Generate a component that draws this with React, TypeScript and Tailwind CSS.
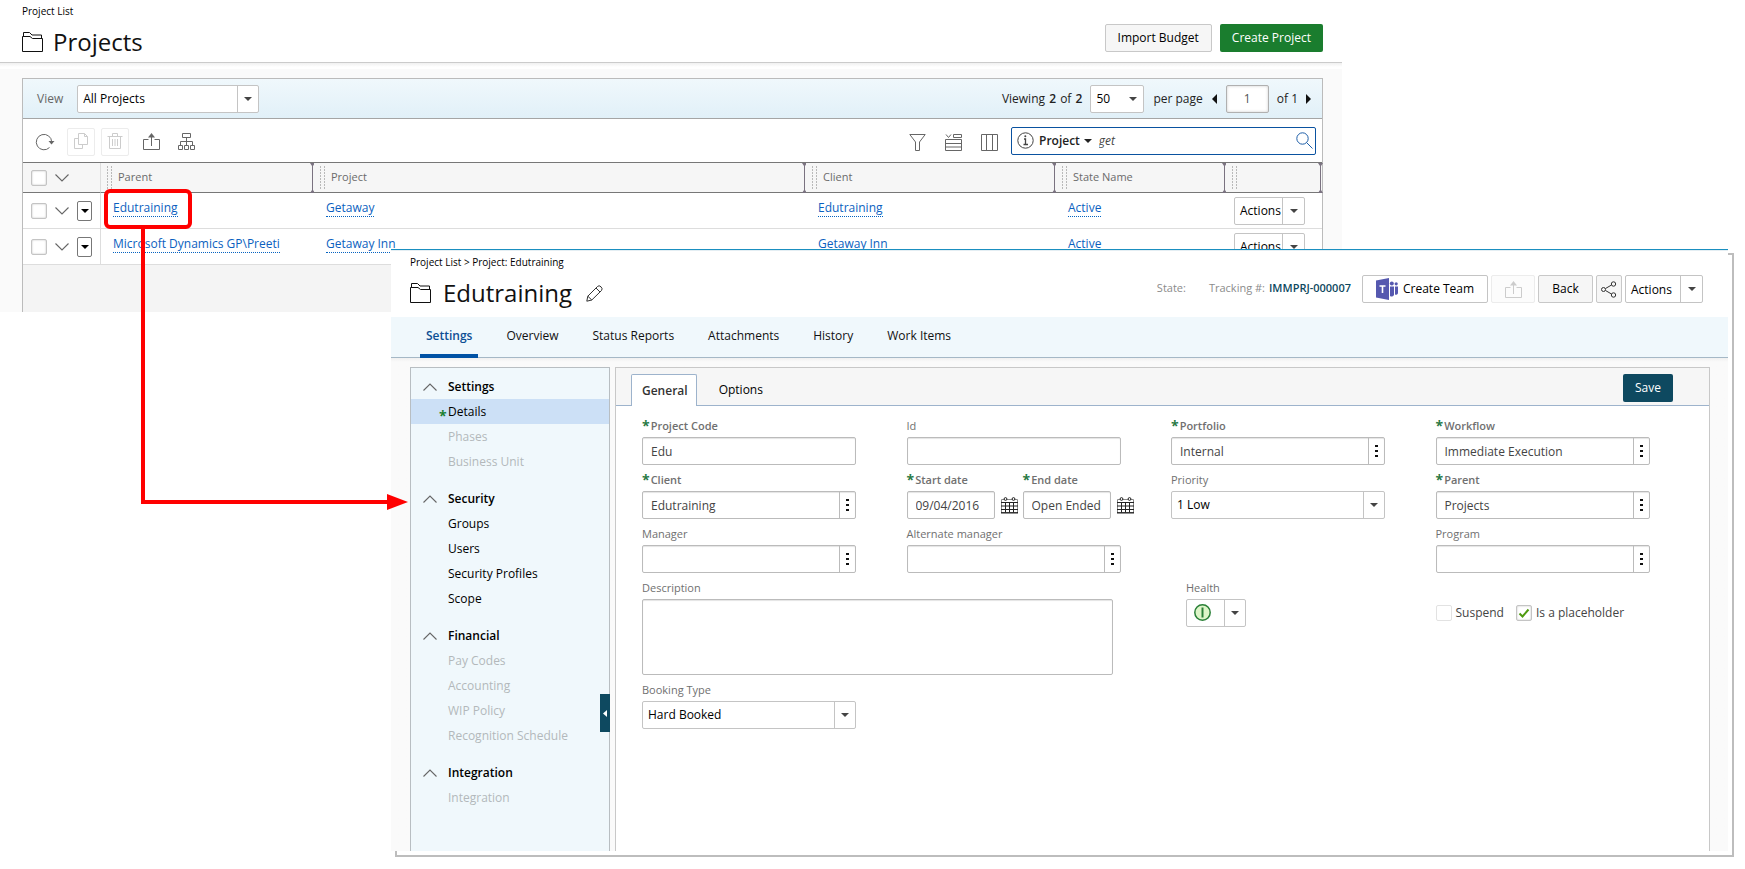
import React, { useState } from 'react';

const projects = [
  { id: 1, parent: 'Edutraining', project: 'Getaway', client: 'Edutraining', state: 'Active' },
  { id: 2, parent: 'Microsoft Dynamics GP\\Preeti', project: 'Getaway Inn', client: 'Getaway Inn', state: 'Active' },
];

const tabs = ['Settings', 'Overview', 'Status Reports', 'Attachments', 'History', 'Work Items'];

const menu = [
  {
    title: 'Settings',
    items: [
      { label: 'Details', active: true },
      { label: 'Phases', disabled: true },
      { label: 'Business Unit', disabled: true },
    ],
  },
  {
    title: 'Security',
    items: [{ label: 'Groups' }, { label: 'Users' }, { label: 'Security Profiles' }, { label: 'Scope' }],
  },
  {
    title: 'Financial',
    items: [
      { label: 'Pay Codes', disabled: true },
      { label: 'Accounting', disabled: true },
      { label: 'WIP Policy', disabled: true },
      { label: 'Recognition Schedule', disabled: true },
    ],
  },
  { title: 'Integration', items: [{ label: 'Integration', disabled: true }] },
] as { title: string; items: { label: string; active?: boolean; disabled?: boolean }[] }[];

function Caret() {
  return (
    <svg width="8" height="4" viewBox="0 0 8 4" className="shrink-0">
      <path d="M0 0h8L4 4z" fill="currentColor" />
    </svg>
  );
}

function FolderIcon() {
  return (
    <svg width="21" height="20" viewBox="0 0 21 20" fill="none" stroke="#111" className="shrink-0">
      <path d="M.5 4.500V19.500H20.500V6.500H10.500L8 4.500H.5zM1.500 4V.5H7.500L10 3H19.500V6" />
    </svg>
  );
}

function Chevron({ up = false }: { up?: boolean }) {
  return (
    <svg width="14" height="8" viewBox="0 0 14 8" fill="none" stroke="#666" strokeWidth="1.100" className="shrink-0">
      <path d={up ? 'M.5 7.500L7 1l6.500 6.500' : 'M.5.5L7 7 13.500.5'} />
    </svg>
  );
}

function ExportIcon() {
  return (
    <svg width="17" height="17" viewBox="0 0 17 17" fill="none" stroke="currentColor">
      <path d="M5.500 6.500h-5v10h16v-10h-5M8.500 13V1.500" />
      <path d="M5 4.500L8.500 0 12 4.500z" fill="currentColor" stroke="none" />
    </svg>
  );
}

function CalendarIcon() {
  return (
    <svg width="17" height="17" viewBox="0 0 17 17" fill="none" stroke="#222">
      <path d="M.5 16V2.500h16V16" stroke="#888" />
      <path d="M0 5.500h17M0 9h17M0 12.500h17M4.500 5.500v10M8.500 5.500v10M12.500 5.500v10" />
      <path d="M0 15.800h17" strokeWidth="1.400" />
      <circle cx="4.500" cy="2" r="1.400" fill="#fff" />
      <circle cx="12.500" cy="2" r="1.400" fill="#fff" />
    </svg>
  );
}

function TeamsIcon() {
  return (
    <svg width="22" height="22" viewBox="0 0 22 22" className="shrink-0">
      <path d="M0 2.500L13 0v22L0 19.500z" fill="#5558af" />
      <path d="M3.500 8h6M6.500 8v7" stroke="#fff" strokeWidth="1.600" />
      <circle cx="15.800" cy="5.500" r="2" fill="#5558af" />
      <circle cx="20.200" cy="5.800" r="1.600" fill="#5558af" />
      <path d="M14 8.500h4v8.500a3 3 0 0 1-4 1zM19 8.500h3v6.500a2 2 0 0 1-3 1.500z" fill="#5558af" />
    </svg>
  );
}

function CheckBox({ label, defaultChecked = false, light = false }: { label: string; defaultChecked?: boolean; light?: boolean }) {
  return (
    <span className="relative block size-4 shrink-0">
      <input
        type="checkbox"
        aria-label={label}
        defaultChecked={defaultChecked}
        className={`peer block size-4 appearance-none rounded-xs border bg-white ${
          light ? 'border-[#e2e2e2]' : 'border-[#c4c4c4] shadow-[inset_0_0_2px_#bbb]'
        }`}
      />
      <svg viewBox="0 0 16 16" className="pointer-events-none absolute inset-0 hidden size-4 peer-checked:block" fill="none" stroke="#4f9a10" strokeWidth="2">
        <path d="M3.500 8.500l3 3 6-7" />
      </svg>
    </span>
  );
}

function SelectBox({ id, options, className = '', divider = true, label }: { id?: string; options: string[]; className?: string; divider?: boolean; label?: string }) {
  return (
    <div className={`relative h-7 rounded-xs border border-[#c4c4c4] bg-white ${className}`}>
      <select id={id} aria-label={label} className="block h-full w-full appearance-none pl-[5px] pr-6 text-xs text-black outline-none">
        {options.map((o) => (
          <option key={o}>{o}</option>
        ))}
      </select>
      <span
        className={`pointer-events-none absolute inset-y-0 right-0 flex w-[21px] items-center justify-center text-[#444] ${
          divider ? 'border-l border-[#c4c4c4]' : ''
        }`}
      >
        <Caret />
      </span>
    </div>
  );
}

function SplitButton({ className = '' }: { className?: string }) {
  return (
    <div className={`flex h-7 rounded-xs border border-[#c4c4c4] bg-white text-xs ${className}`}>
      <button type="button" className="flex-1 pt-px pl-[5px] text-left">
        Actions
      </button>
      <button type="button" aria-label="More actions" className="flex w-[22px] items-center justify-center border-l border-[#c4c4c4] text-[#444]">
        <Caret />
      </button>
    </div>
  );
}

function Label({ htmlFor, text, required = false }: { htmlFor: string; text: string; required?: boolean }) {
  return (
    <label
      htmlFor={htmlFor}
      className={`flex h-[22px] items-center whitespace-nowrap text-[11px] text-[#707070] ${required ? 'font-semibold' : ''}`}
    >
      {required && <span className="mr-px h-4 text-sm leading-4 font-bold text-[#2a7a45]">*</span>}
      {text}
    </label>
  );
}

function TextField({
  id,
  label,
  value = '',
  required = false,
  picker = false,
  className = '',
}: {
  id: string;
  label: string;
  value?: string;
  required?: boolean;
  picker?: boolean;
  className?: string;
}) {
  return (
    <div className={`w-[81%] ${className}`}>
      <Label htmlFor={id} text={label} required={required} />
      <div className="flex h-7 rounded-xs border border-[#bbb] bg-white shadow-[inset_0_1px_1px_#e4e4e4]">
        <input id={id} defaultValue={value} className="w-full min-w-0 flex-1 bg-transparent px-2 pt-px text-xs text-[#444] outline-none" />
        {picker && (
          <button type="button" aria-label={`Pick ${label}`} className="flex w-4 shrink-0 items-center justify-center border-l border-[#bbb]">
            <svg width="3" height="13" viewBox="0 0 3 13" fill="#111">
              <path d="M0 0h3v2H0zM0 5h3v2H0zM0 10h3v2H0z" />
            </svg>
          </button>
        )}
      </div>
    </div>
  );
}

function DateField({ id, label, value }: { id: string; label: string; value: string }) {
  return (
    <div>
      <Label htmlFor={id} text={label} required />
      <div className="flex items-center gap-[6px]">
        <input
          id={id}
          defaultValue={value}
          className="h-7 w-[88px] rounded-xs border border-[#bbb] bg-white px-2 pt-px text-xs text-[#444] shadow-[inset_0_1px_1px_#e4e4e4] outline-none"
        />
        <button type="button" aria-label={`Open ${label} calendar`}>
          <CalendarIcon />
        </button>
      </div>
    </div>
  );
}

// Column resize handle drawn at the right edge of a header cell
function Resizer() {
  return (
    <svg width="5" height="30" viewBox="0 0 5 30" className="absolute top-0 -right-px">
      <path d="M0 0h5L3 3v24l2 3H0l2-3V3z" fill="#7a7280" />
    </svg>
  );
}

function HeaderCell({ text }: { text: string }) {
  return (
    <th className="relative h-[30px] border-b border-[#777] bg-[#f6f6f6] p-0 text-left font-normal text-[#6b6b6b]">
      <div className="flex items-center gap-[6px] pl-[6px] text-[11px]">
        <svg width="5" height="23" viewBox="0 0 5 23" fill="none" stroke="#b9b9b9" strokeDasharray="2 1">
          <path d="M.5 0v23M4.500 0v23" />
        </svg>
        {text}
      </div>
      <Resizer />
    </th>
  );
}

function CellLink({ children }: { children: React.ReactNode }) {
  return (
    <a href="#" className="border-b border-dotted border-[#0563c1] text-xs leading-4 whitespace-nowrap text-[#0b5fc0]">
      {children}
    </a>
  );
}

function ProjectList() {
  return (
    <section className="mr-[403px] bg-white">
      <header className="flex items-start justify-between border-b border-[#cbcbcb] pt-1 pr-[19px] pb-1 pl-[22px]">
        <div>
          <p className="text-[10px] leading-[14px]">Project List</p>
          <div className="mt-2 flex items-center gap-[10px]">
            <FolderIcon />
            <h1 className="text-2xl leading-8 text-[#111]">Projects</h1>
          </div>
        </div>
        <div className="mt-5 flex gap-2 text-xs">
          <button type="button" className="h-7 rounded-xs border border-[#c8c8c8] bg-[#f6f6f6] px-3">
            Import Budget
          </button>
          <button type="button" className="h-7 rounded-xs bg-[#1a7d2e] px-3 text-white">
            Create Project
          </button>
        </div>
      </header>

      <div className="bg-[#fafafa] bg-[linear-gradient(#f0f0f0,#fff_4px,#fff_6px,#fafafa_6px)] pt-[15px] pr-[19px] pl-[22px]">
        <div className="border border-b-0 border-[#bbb] bg-[#f4f4f4] pb-[47px]">
          {/* View and paging */}
          <div className="flex h-10 items-center justify-between border-b border-[#a5a5a5] bg-linear-to-b from-[#f0f8fc] to-[#e1f0f8] pr-[11px] pl-[14px] text-xs">
            <div className="flex items-center gap-[14px]">
              <label htmlFor="view" className="text-[#666]">
                View
              </label>
              <SelectBox id="view" options={['All Projects']} className="w-[182px]" />
            </div>
            <div className="flex items-center gap-2 text-[#222]">
              <span className="whitespace-nowrap">
                Viewing <b className="mx-px font-semibold">2</b> of <b className="ml-px font-semibold">2</b>
              </span>
              <SelectBox label="Rows per page" options={['50']} className="w-[54px]" divider={false} />
              <span className="ml-px">per page</span>
              <button type="button" aria-label="Previous page" className="px-px">
                <svg width="5" height="10" viewBox="0 0 5 10">
                  <path d="M5 0v10L0 5z" fill="#111" />
                </svg>
              </button>
              <input
                aria-label="Page"
                defaultValue="1"
                className="h-7 w-[43px] rounded-xs border border-[#b0b0b0] bg-white text-center text-[#555] shadow-[inset_0_0_3px_#ccc] outline-none"
              />
              <span>of 1</span>
              <button type="button" aria-label="Next page">
                <svg width="5" height="10" viewBox="0 0 5 10">
                  <path d="M0 0v10l5-5z" fill="#111" />
                </svg>
              </button>
            </div>
          </div>

          {/* Toolbar */}
          <div className="flex h-11 items-center justify-between border-b border-[#777] bg-white pr-[6px] pl-3 text-[#666]">
            <div className="flex items-center pt-[2px]">
              <button type="button" aria-label="Refresh">
                <svg width="20" height="18" viewBox="0 0 20 18" fill="none" stroke="currentColor">
                  <path d="M14.500 14.500A7.700 7.700 0 1 1 16.700 9" />
                  <path d="M13.500 8h6l-3 3.500z" fill="currentColor" stroke="none" />
                </svg>
              </button>
              <button type="button" aria-label="Copy" className="ml-3 flex size-7 items-center justify-center rounded-xs border border-[#ececec] text-[#ccc]">
                <svg width="16" height="17" viewBox="0 0 16 17" fill="none" stroke="currentColor">
                  <path d="M5.500.5h6l3 3v8h-9zM11.500.5v3h3M5.500 5.500h-4v10h8v-4" />
                </svg>
              </button>
              <button type="button" aria-label="Delete" className="ml-[6px] flex size-7 items-center justify-center rounded-xs border border-[#ececec] text-[#ccc]">
                <svg width="16" height="17" viewBox="0 0 16 17" fill="none" stroke="currentColor">
                  <path d="M.5 3.500h15M5.500 3V.5h5V3M2.500 3.500v12h11v-12M5.500 6v7M8 6v7M10.500 6v7" />
                </svg>
              </button>
              <button type="button" aria-label="Export" className="ml-[14px]">
                <ExportIcon />
              </button>
              <button type="button" aria-label="Hierarchy" className="ml-[18px]">
                <svg width="17" height="17" viewBox="0 0 17 17" fill="none" stroke="currentColor">
                  <path d="M4.500.5h8v4h-8zM8.500 4.500v8M2.500 12V8.500h12V12M.5 12.500h4v4h-4zM6.500 12.500h4v4h-4zM12.500 12.500h4v4h-4z" />
                </svg>
              </button>
            </div>
            <div className="flex items-center">
              <div className="flex items-center gap-[19px] pt-[3px]">
                <button type="button" aria-label="Filter">
                  <svg width="17" height="17" viewBox="0 0 17 17" fill="none" stroke="currentColor">
                    <path d="M.8.5h15.400L10.500 8v8.500h-4V8z" />
                  </svg>
                </button>
                <button type="button" aria-label="Group rows">
                  <svg width="17" height="17" viewBox="0 0 17 17" fill="none" stroke="currentColor">
                    <path d="M1 .5l2.500 3L6 .5M8.500.5h8v3h-8zM.5 5.500h16v11H.5zM.5 9.500h16M.5 13h16" />
                  </svg>
                </button>
                <button type="button" aria-label="Columns">
                  <svg width="17" height="17" viewBox="0 0 17 17" fill="none" stroke="currentColor">
                    <path d="M.5.5h16v16H.5zM5.500.5v16M11.500.5v16" />
                  </svg>
                </button>
              </div>
              <div className="ml-[13px] flex h-7 w-[305px] items-center rounded-xs border border-[#0a52a0] bg-white pr-[2px] pl-[5px] text-xs">
                <svg width="17" height="17" viewBox="0 0 17 17" fill="none" stroke="#444">
                  <circle cx="8.500" cy="8.500" r="7.700" />
                  <path d="M7 7h1.500v5.500M6.500 12.500h4.500" strokeWidth="1.300" />
                  <circle cx="8.300" cy="4.300" r="1" fill="#444" stroke="none" />
                </svg>
                <button type="button" className="ml-[5px] flex items-center gap-1 font-semibold text-[#222]">
                  Project
                  <Caret />
                </button>
                <input aria-label="Search projects" defaultValue="get" className="ml-[7px] min-w-0 flex-1 text-[#444] italic outline-none" />
                <button type="button" aria-label="Search">
                  <svg width="17" height="17" viewBox="0 0 17 17" fill="none" stroke="#1d5ea8">
                    <circle cx="6.500" cy="6.500" r="5.700" />
                    <path d="M10.500 10.500l6 6" />
                  </svg>
                </button>
              </div>
            </div>
          </div>

          <table className="w-full table-fixed border-separate border-spacing-0">
            <colgroup>
              <col className="w-[78px]" />
              <col className="w-[213px]" />
              <col />
              <col className="w-[250px]" />
              <col className="w-[170px]" />
              <col className="w-24" />
            </colgroup>
            <thead>
              <tr>
                <th className="h-[30px] border-r border-b border-r-[#ddd] border-b-[#777] bg-[#f6f6f6] p-0">
                  <div className="flex items-center gap-2 pl-2">
                    <CheckBox label="Select all" />
                    <Chevron />
                  </div>
                </th>
                <HeaderCell text="Parent" />
                <HeaderCell text="Project" />
                <HeaderCell text="Client" />
                <HeaderCell text="State Name" />
                <HeaderCell text="" />
              </tr>
            </thead>
            <tbody>
              {projects.map((p) => (
                <tr key={p.id} className="*:h-9 *:border-b *:border-[#ddd] *:bg-white *:p-0">
                  <td className="border-r">
                    <div className="flex items-center gap-2 pt-px pl-2">
                      <CheckBox label={`Select ${p.project}`} />
                      <Chevron />
                      <button type="button" aria-label="Row menu" className="flex h-5 w-[15px] items-center justify-center rounded-xs border border-[#777] text-black">
                        <Caret />
                      </button>
                    </div>
                  </td>
                  {[p.parent, p.project, p.client, p.state].map((value, i) => (
                    <td key={i} className="align-top">
                      <div className="flex pt-[7px] pl-3">
                        <CellLink>{value}</CellLink>
                      </div>
                    </td>
                  ))}
                  <td>
                    <SplitButton className="mx-2 w-[71px]" />
                  </td>
                </tr>
              ))}
            </tbody>
          </table>
        </div>
      </div>
    </section>
  );
}

function Sidebar() {
  return (
    <nav className="relative w-[200px] shrink-0 border border-b-0 border-[#b8bec2] bg-[#f0f8fc] pt-[6px] pb-[41px] text-xs">
      {menu.map((group) => (
        <div key={group.title} className="mb-3 last-of-type:mb-0">
          <button type="button" className="flex h-[25px] items-center gap-[11px] pl-3 font-semibold">
            <Chevron up />
            {group.title}
          </button>
          {group.items.map((item) => (
            <a
              key={item.label}
              href="#"
              className={`relative flex h-[25px] items-center pl-[37px] ${item.active ? 'bg-[#cce0f6]' : ''} ${
                item.disabled ? 'text-[#b3b8bb]' : 'text-black'
              }`}
            >
              {item.active && <span className="absolute top-[9px] left-7 text-sm leading-4 font-bold text-[#1a8030]">*</span>}
              {item.label}
            </a>
          ))}
        </div>
      ))}
      <button type="button" aria-label="Collapse menu" className="absolute right-0 bottom-[119px] -mr-px flex h-[38px] w-[10px] items-center justify-center bg-[#0e4960]">
        <svg width="4" height="7" viewBox="0 0 4 7">
          <path d="M4 0v7L0 3.500z" fill="#fff" />
        </svg>
      </button>
    </nav>
  );
}

function ProjectForm() {
  return (
    <div className="min-w-0 flex-1 border border-b-0 border-[#c8c8c8] bg-white">
      <div className="flex h-[38px] items-start justify-between border-b border-[#9db3cc] bg-[#f6f6f6] pt-[6px] pr-9 pl-[15px] text-xs">
        <div className="flex">
          <button type="button" className="h-8 rounded-t-xs border border-b-0 border-[#9db3cc] bg-white pt-px pr-2 pl-[10px] font-semibold text-[#333]">
            General
          </button>
          <button type="button" className="h-8 px-[22px]">
            Options
          </button>
        </div>
        <button type="button" className="h-7 w-[50px] rounded-xs bg-[#0e4960] text-white">
          Save
        </button>
      </div>

      <form className="grid grid-cols-4 gap-y-1 pt-[9px] pr-[9px] pl-[26px]">
        <TextField id="code" label="Project Code" value="Edu" required />
        <TextField id="pid" label="Id" />
        <TextField id="portfolio" label="Portfolio" value="Internal" required picker />
        <TextField id="workflow" label="Workflow" value="Immediate Execution" required picker />

        <TextField id="client" label="Client" value="Edutraining" required picker />
        <div className="flex gap-[5px]">
          <DateField id="start" label="Start date" value="09/04/2016" />
          <DateField id="end" label="End date" value="Open Ended" />
        </div>
        <div className="w-[81%]">
          <Label htmlFor="priority" text="Priority" />
          <SelectBox id="priority" options={['1 Low']} />
        </div>
        <TextField id="parent" label="Parent" value="Projects" required picker />

        <TextField id="manager" label="Manager" picker />
        <TextField id="altmanager" label="Alternate manager" picker />
        <TextField id="program" label="Program" picker className="col-start-4" />

        <div className="col-span-2 col-start-1">
          <Label htmlFor="description" text="Description" />
          <textarea id="description" className="block h-[76px] w-[89%] resize-none rounded-xs border border-[#bbb] p-2 text-xs shadow-[inset_0_1px_1px_#e4e4e4] outline-none" />
        </div>
        <div className="ml-[15px]">
          <Label htmlFor="health" text="Health" />
          <div className="relative">
            <SelectBox id="health" options={['']} className="w-[60px]" />
            <svg width="17" height="17" viewBox="0 0 17 17" className="pointer-events-none absolute top-[5px] left-2">
              <circle cx="8.500" cy="8.500" r="7.700" fill="#ddf5c8" stroke="#2a8038" strokeWidth="1.500" />
              <path d="M8.500 3.500v10" stroke="#2a8038" strokeWidth="2" />
            </svg>
          </div>
        </div>
        <div className="flex items-center gap-3 self-start pt-7 text-xs leading-4 whitespace-nowrap text-[#444]">
          <label className="flex items-center gap-1">
            <CheckBox label="Suspend" light />
            Suspend
          </label>
          <label className="flex items-center gap-1">
            <CheckBox label="Is a placeholder" defaultChecked />
            Is a placeholder
          </label>
        </div>

        <div className="col-start-1 w-[81%]">
          <Label htmlFor="booking" text="Booking Type" />
          <SelectBox id="booking" options={['Hard Booked']} />
        </div>
      </form>
    </div>
  );
}

function ProjectDetails() {
  const [activeTab, setActiveTab] = useState('Settings');

  return (
    <section className="relative isolate -mt-[63px] mr-[17px] ml-[391px]">
      <div className="absolute top-1 -right-[6px] -bottom-[6px] left-1 -z-10 border-2 border-[#bdbdbd] bg-white" />
      <div className="border-t border-[#1a8fc0] bg-white">
        <header className="flex items-start justify-between border-t border-[#e4eef3] pt-1 pr-[25px] pb-2 pl-[19px]">
          <div>
            <p className="text-[10px] leading-[14px]">Project List &gt; Project: Edutraining</p>
            <div className="mt-2 flex items-center">
              <FolderIcon />
              <h2 className="ml-3 text-2xl leading-8 text-[#111]">Edutraining</h2>
              <button type="button" aria-label="Edit name" className="ml-[14px]">
                <svg width="17" height="17" viewBox="0 0 17 17" fill="none" stroke="#333">
                  <path d="M.8 16.200l1-5L11.500 1.500Q13-.2 15 1.800T15.500 5.500L5.800 15zM1.800 11.200l4 3.800M10 3l4 4" />
                </svg>
              </button>
            </div>
          </div>
          <div className="mt-5 flex items-center gap-[3px] text-xs">
            <div className="mr-2 -mt-[2px] flex items-center text-[11px] text-[#8b8b8b]">
              <span className="mr-[23px]">State:</span>
              <span>Tracking #:</span>
              <b className="ml-1 font-semibold text-[#0e4960]">IMMPRJ-000007</b>
            </div>
            <button type="button" className="flex h-7 w-[126px] items-center gap-[5px] rounded-xs border border-[#c4c4c4] bg-white pl-[13px]">
              <TeamsIcon />
              Create Team
            </button>
            <button type="button" aria-label="Export" className="flex h-7 w-11 items-center justify-center rounded-xs border border-[#ececec] bg-[#fcfcfc] text-[#ccc]">
              <ExportIcon />
            </button>
            <button type="button" className="h-7 w-[55px] rounded-xs border border-[#c8c8c8] bg-[#f6f6f6]">
              Back
            </button>
            <button type="button" aria-label="Share" className="flex h-7 w-[26px] items-center justify-center rounded-xs border border-[#c8c8c8] bg-[#f6f6f6]">
              <svg width="16" height="17" viewBox="0 0 16 17" fill="none" stroke="#333">
                <circle cx="2.500" cy="8.500" r="2" />
                <circle cx="12.500" cy="3" r="2.200" />
                <circle cx="12.500" cy="14" r="2.200" />
                <path d="M4.500 7.500l6-3.500M4.500 9.500l6 3.500" />
              </svg>
            </button>
            <SplitButton className="w-[78px]" />
          </div>
        </header>

        <div className="flex h-[41px] gap-[22px] border-b border-[#a5b8c6] bg-[#f0f8fc] pl-[29px] text-xs">
          {tabs.map((tab) => (
            <button
              key={tab}
              type="button"
              onClick={() => setActiveTab(tab)}
              className={`-mb-px border-b-4 px-[6px] pt-px ${
                tab === activeTab ? 'border-[#0052a5] font-semibold text-[#0e4f94]' : 'border-transparent text-[#111]'
              }`}
            >
              {tab}
            </button>
          ))}
        </div>

        <div className="flex gap-[5px] bg-[#fafafa] bg-linear-to-b from-[#f0f0f0] to-[#fafafa] to-[4px] pt-[9px] pr-[18px] pl-[19px]">
          <Sidebar />
          <ProjectForm />
        </div>
      </div>
    </section>
  );
}

export default function App() {
  return (
    <main className="relative bg-white pb-[17px] font-['Open_Sans',sans-serif] text-black">
      <ProjectList />
      <ProjectDetails />

      {/* Callout from the parent link to the project it opens */}
      <div className="pointer-events-none absolute top-[189px] left-[104px] z-20 h-10 w-[88px] rounded-md border-4 border-[#f00]" />
      <svg width="268" height="282" viewBox="0 0 268 282" className="pointer-events-none absolute top-[228px] left-[141px] z-20">
        <path d="M2 0v274h246" fill="none" stroke="#f00" strokeWidth="4" />
        <path d="M246 266l21 8-21 8z" fill="#f00" />
      </svg>
    </main>
  );
}
